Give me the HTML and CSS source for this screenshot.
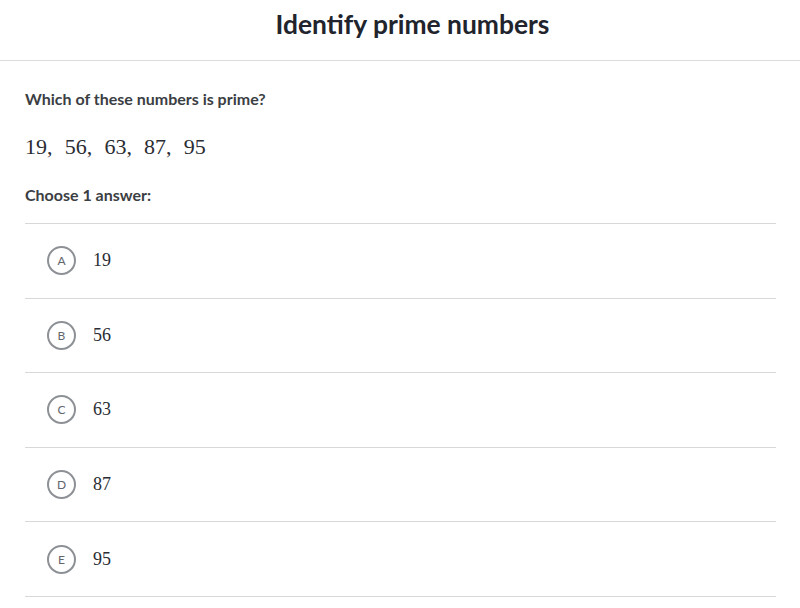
FILE: index.html
```html
<!DOCTYPE html>
<html>
<head>
<meta charset="utf-8">
<link rel="stylesheet" href="styles.css">
</head>
<body>
<header class="top">
  <h1 class="title">Identify prime numbers</h1>
</header>
<main class="content">
  <p class="question">Which of these numbers is prime?</p>
  <p class="math">19,&nbsp; 56,&nbsp; 63,&nbsp; 87,&nbsp; 95</p>
  <p class="prompt">Choose 1 answer:</p>
  <ul class="choices">
    <li class="choice"><span class="letter">A</span><span class="value">19</span></li>
    <li class="choice"><span class="letter">B</span><span class="value">56</span></li>
    <li class="choice"><span class="letter">C</span><span class="value">63</span></li>
    <li class="choice"><span class="letter">D</span><span class="value">87</span></li>
    <li class="choice"><span class="letter">E</span><span class="value">95</span></li>
  </ul>
</main>
</body>
</html>
```
FILE: styles.css
```css
* { box-sizing: border-box; }
html, body { margin: 0; padding: 0; background: #fff; }
body { font-family: Lato, "Noto Sans", sans-serif; color: #21242c; }

.top {
  height: 61px;
  border-bottom: 1px solid #dcdddf;
  display: flex;
  align-items: center;
  justify-content: center;
  padding: 0 0 13px 25px;
}
.title {
  margin: 0;
  font-size: 26.4px;
  font-weight: 700;
  color: #21242c;
}

.content { padding: 0 24px 0 25px; }

.question {
  margin: 0;
  padding-top: 27px;
  height: 72px;
  font-size: 16px;
  font-weight: 700;
  line-height: 22px;
  color: #3b3e43;
}
.math {
  margin: 0;
  height: 51px;
  font-family: "Liberation Serif", serif;
  font-size: 22px;
  line-height: 28px;
  word-spacing: 0.6px;
  color: #2a2d33;
}
.prompt {
  margin: 0;
  height: 39px;
  font-size: 16px;
  font-weight: 700;
  line-height: 22px;
  color: #3b3e43;
}

.choices { list-style: none; margin: 0; padding: 0; border-bottom: 1px solid #d6d8da; }
.choice {
  display: flex;
  align-items: center;
  height: 74.6px;
  border-top: 1px solid #d6d8da;
  padding-left: 22px;
}
.letter {
  width: 29px;
  height: 29px;
  border: 2px solid #8d9196;
  border-radius: 50%;
  display: flex;
  align-items: center;
  justify-content: center;
  font-size: 12px;
  color: #62666c;
  margin-right: 17px;
}
.value {
  font-family: "Liberation Serif", serif;
  font-size: 18px;
  color: #2a2d33;
}
```
